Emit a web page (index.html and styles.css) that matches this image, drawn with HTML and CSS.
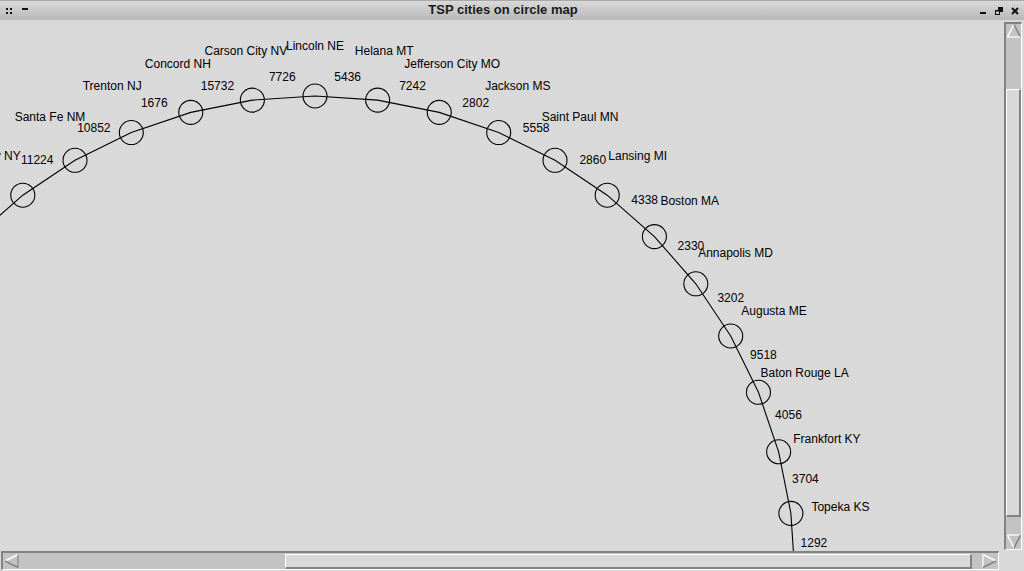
FILE: index.html
```html
<!DOCTYPE html>
<html>
<head>
<meta charset="utf-8">
<title>TSP cities on circle map</title>
<link rel="stylesheet" href="styles.css">
</head>
<body>
<div class="window">
  <div class="titlebar">
    <div class="tb-left">
      <svg class="tb-icon" width="8" height="8" viewBox="0 0 8 8"><rect x="1" y="1" width="2" height="2"/><rect x="5" y="1" width="2" height="2"/><rect x="1" y="5" width="2" height="2"/><rect x="5" y="5" width="2" height="2"/></svg>
      <svg class="tb-icon" width="8" height="8" viewBox="0 0 8 8"><rect x="1" y="1" width="6" height="2"/></svg>
    </div>
    <div class="tb-title">TSP cities on circle map</div>
    <div class="tb-right">
      <svg class="tb-icon" width="8" height="8" viewBox="0 0 8 8"><rect x="1" y="5" width="6" height="2"/></svg>
      <svg class="tb-icon" width="8" height="8" viewBox="0 0 8 8" fill="none" stroke="#111" stroke-width="1"><rect x="3.5" y="0.5" width="4" height="4"/><rect x="0.5" y="3.5" width="4" height="4" fill="#c4c4c4"/><line x1="3.5" y1="1" x2="7.5" y2="1"/><line x1="0.5" y1="4" x2="4.5" y2="4"/></svg>
      <svg class="tb-icon" width="8" height="8" viewBox="0 0 8 8" stroke="#111" stroke-width="2"><line x1="1" y1="1" x2="7" y2="7"/><line x1="7" y1="1" x2="1" y2="7"/></svg>
    </div>
  </div>
  <div class="main">
    <div class="canvas">
      <svg class="map" width="1004" height="531" viewBox="0 20 1004 531">
        <polyline class="route" points="-24.41,236.59 22.79,195.19 75,160.31 131.31,132.54 190.77,112.36 252.35,100.11 315,96 377.65,100.11 439.23,112.36 498.69,132.54 555,160.31 607.21,195.19 654.41,236.59 695.81,283.79 730.69,336 758.46,392.31 778.64,451.77 790.89,513.35 795,576"/>
        <g class="nodes">
          <circle cx="22.79" cy="195.19" r="12"/>
          <circle cx="75" cy="160.31" r="12"/>
          <circle cx="131.31" cy="132.54" r="12"/>
          <circle cx="190.77" cy="112.36" r="12"/>
          <circle cx="252.35" cy="100.11" r="12"/>
          <circle cx="315" cy="96" r="12"/>
          <circle cx="377.65" cy="100.11" r="12"/>
          <circle cx="439.23" cy="112.36" r="12"/>
          <circle cx="498.69" cy="132.54" r="12"/>
          <circle cx="555" cy="160.31" r="12"/>
          <circle cx="607.21" cy="195.19" r="12"/>
          <circle cx="654.41" cy="236.59" r="12"/>
          <circle cx="695.81" cy="283.79" r="12"/>
          <circle cx="730.69" cy="336" r="12"/>
          <circle cx="758.46" cy="392.31" r="12"/>
          <circle cx="778.64" cy="451.77" r="12"/>
          <circle cx="790.89" cy="513.35" r="12"/>
        </g>
        <g class="labels">
          <text x="-7.64" y="159.5">Albany NY</text>
          <text x="50" y="121">Santa Fe NM</text>
          <text x="112.18" y="90.3">Trenton NJ</text>
          <text x="177.83" y="68.1">Concord NH</text>
          <text x="245.82" y="54.5">Carson City NV</text>
          <text x="315" y="50">Lincoln NE</text>
          <text x="384.18" y="54.5">Helana MT</text>
          <text x="452.17" y="68.1">Jefferson City MO</text>
          <text x="517.82" y="90.3">Jackson MS</text>
          <text x="580" y="121">Saint Paul MN</text>
          <text x="637.64" y="159.5">Lansing MI</text>
          <text x="689.77" y="205.2">Boston MA</text>
          <text x="735.48" y="257.4">Annapolis MD</text>
          <text x="774" y="315">Augusta ME</text>
          <text x="804.66" y="377.2">Baton Rouge LA</text>
          <text x="826.94" y="442.8">Frankfort KY</text>
          <text x="840.47" y="510.8">Topeka KS</text>
        </g>
        <g class="labels">
          <text x="37.21" y="164.3">11224</text>
          <text x="93.86" y="131.6">10852</text>
          <text x="154.28" y="106.5">1676</text>
          <text x="217.45" y="89.6">15732</text>
          <text x="282.3" y="81.1">7726</text>
          <text x="347.7" y="81.1">5436</text>
          <text x="412.55" y="89.6">7242</text>
          <text x="475.72" y="106.5">2802</text>
          <text x="536.14" y="131.6">5558</text>
          <text x="592.79" y="164.3">2860</text>
          <text x="644.67" y="204.1">4338</text>
          <text x="690.92" y="250.3">2330</text>
          <text x="730.74" y="302.2">3202</text>
          <text x="763.44" y="358.9">9518</text>
          <text x="788.47" y="419.3">4056</text>
          <text x="805.39" y="482.5">3704</text>
          <text x="813.93" y="547.3">1292</text>
        </g>
      </svg>
    </div>
    <div class="vscroll">
      <svg class="arrow" width="14" height="14" viewBox="0 0 14 14"><polygon points="7,0.5 0.5,13 13.5,13" fill="#c3c3c3"/><polyline points="0.5,13 7,0.5" stroke="#fff" fill="none" stroke-width="1.5"/><polyline points="7,0.5 13.5,13" stroke="#828282" fill="none" stroke-width="1.5"/><line x1="0.5" y1="13" x2="13.5" y2="13" stroke="#fff" stroke-width="1.2"/></svg>
      <div class="vtrough">
        <div class="vgap-top"></div>
        <div class="vthumb"></div>
        <div class="vgap-bottom"></div>
      </div>
      <svg class="arrow" width="14" height="15" viewBox="0 0 14 15"><polygon points="0.5,1 13.5,1 7,14" fill="#c3c3c3"/><line x1="0.5" y1="1" x2="13.5" y2="1" stroke="#fff" stroke-width="1.2"/><polyline points="0.5,1 7,14" stroke="#fff" fill="none" stroke-width="1.5"/><polyline points="7,14 13.5,1" stroke="#828282" fill="none" stroke-width="1.5"/></svg>
    </div>
  </div>
  <div class="bottom">
    <div class="hscroll">
      <svg class="arrow" width="15" height="14" viewBox="0 0 15 14"><polygon points="1,7 14,0.5 14,13.5" fill="#c3c3c3"/><polyline points="1,7 14,0.5" stroke="#fff" fill="none" stroke-width="1.5"/><polyline points="1,7 14,13.5" stroke="#828282" fill="none" stroke-width="1.5"/><line x1="14" y1="0.5" x2="14" y2="13.5" stroke="#828282" stroke-width="1.2"/></svg>
      <div class="htrough">
        <div class="hgap-left"></div>
        <div class="hthumb"></div>
        <div class="hgap-right"></div>
      </div>
      <svg class="arrow" width="15" height="14" viewBox="0 0 15 14"><polygon points="1,0.5 14,7 1,13.5" fill="#c3c3c3"/><line x1="1" y1="0.5" x2="1" y2="13.5" stroke="#fff" stroke-width="1.2"/><polyline points="1,0.5 14,7" stroke="#fff" fill="none" stroke-width="1.5"/><polyline points="14,7 1,13.5" stroke="#828282" fill="none" stroke-width="1.5"/></svg>
    </div>
    <div class="corner"></div>
  </div>
</div>
</body>
</html>
```
FILE: styles.css
```css
html, body {
  margin: 0;
  padding: 0;
  width: 1024px;
  height: 571px;
  overflow: hidden;
  background: #d9d9d9;
  font-family: "Liberation Sans", Arial, sans-serif;
}

.window {
  width: 1024px;
  height: 571px;
  display: flex;
  flex-direction: column;
  background: #d9d9d9;
}

.titlebar {
  height: 19px;
  border-top: 1px solid #a8a8a8;
  background: linear-gradient(#d9d9d9, #b8b8b8);
  display: flex;
  align-items: center;
  position: relative;
  flex: none;
}

.tb-left {
  display: flex;
  gap: 8px;
  padding-left: 5px;
  align-items: center;
  height: 19px;
}

.tb-right {
  display: flex;
  gap: 8px;
  align-items: center;
  margin-left: auto;
  padding-right: 5px;
  height: 19px;
}

.tb-icon {
  display: block;
  fill: #111;
}

.tb-title {
  position: absolute;
  left: 0;
  right: 18px;
  top: 0;
  text-align: center;
  font-weight: bold;
  font-size: 13px;
  line-height: 18px;
  color: #1a1a1a;
  pointer-events: none;
}

.main {
  display: flex;
  height: 531px;
  flex: none;
}

.canvas {
  width: 1004px;
  height: 531px;
  overflow: hidden;
  flex: none;
}

.map {
  display: block;
}

.route {
  fill: none;
  stroke: #000;
  stroke-width: 1.1;
}

.nodes circle {
  fill: none;
  stroke: #000;
  stroke-width: 1.1;
}

.labels text {
  font-family: "Liberation Sans", Arial, sans-serif;
  font-size: 12px;
  fill: #000;
  text-anchor: middle;
}

.vscroll {
  width: 15px;
  margin: 2px 1px 1px 0;
  border-left: 2px solid #828282;
  border-top: 2px solid #828282;
  border-right: 1px solid #fff;
  border-bottom: 1px solid #fff;
  background: #c3c3c3;
  display: flex;
  flex-direction: column;
  align-items: center;
  flex: none;
}

.vscroll .arrow {
  display: block;
  flex: none;
}

.vtrough {
  flex: 1;
  width: 15px;
  display: flex;
  flex-direction: column;
}

.vgap-top {
  height: 51px;
}

.vthumb {
  height: 428px;
  background: #d9d9d9;
  border-top: 1px solid #fff;
  border-left: 1px solid #fff;
  border-right: 2px solid #828282;
  border-bottom: 2px solid #828282;
  box-sizing: border-box;
}

.vgap-bottom {
  flex: 1;
}

.bottom {
  display: flex;
  height: 20px;
  flex: none;
}

.hscroll {
  width: 998px;
  margin-left: 1px;
  border-left: 2px solid #828282;
  border-top: 2px solid #828282;
  border-right: 1px solid #fff;
  border-bottom: 1px solid #fff;
  background: #c3c3c3;
  display: flex;
  align-items: center;
  box-sizing: border-box;
  height: 19px;
  padding: 0 1px;
  flex: none;
}

.hscroll .arrow {
  display: block;
  flex: none;
}

.htrough {
  flex: 1;
  height: 15px;
  display: flex;
}

.hgap-left {
  width: 266px;
}

.hthumb {
  flex: 1;
  background: #d9d9d9;
  border-top: 1px solid #fff;
  border-left: 1px solid #fff;
  border-right: 2px solid #828282;
  border-bottom: 2px solid #828282;
  box-sizing: border-box;
}

.hgap-right {
  width: 10px;
}

.corner {
  flex: 1;
}
```
